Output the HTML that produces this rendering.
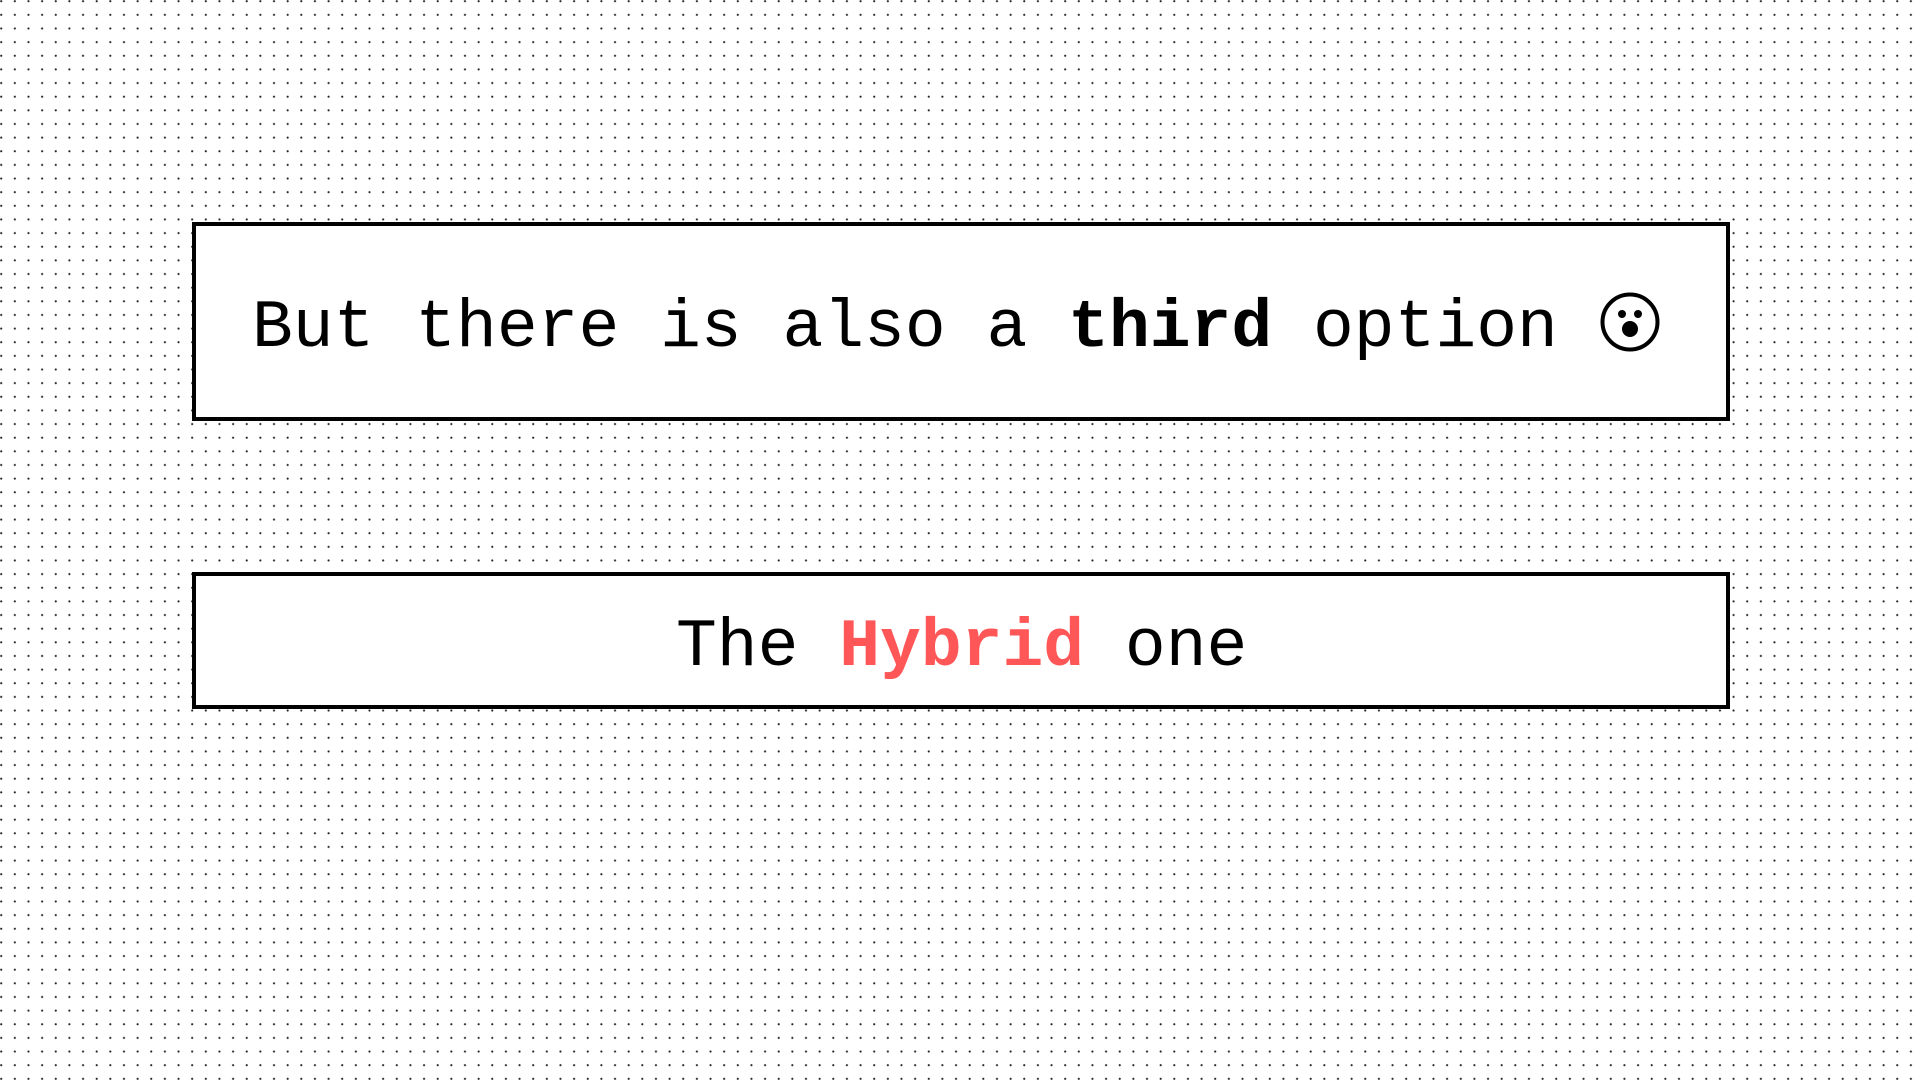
<!DOCTYPE html>
<html><head><meta charset="utf-8"><style>
html,body{margin:0;padding:0;}
body{width:1920px;height:1080px;position:relative;overflow:hidden;background-color:#fff;
background-image:radial-gradient(circle at 1.2px 1.2px,#222 0,#222 0.8px,transparent 1.3px);
background-size:13.65px 13.65px;background-position:0 0;
font-family:"Liberation Mono",monospace;color:#000;}
.box{position:absolute;background:#fff;border:4px solid #000;box-sizing:border-box;}
.t{position:absolute;font-size:68px;line-height:1;white-space:pre;}
</style></head><body>
<div class="box" style="left:192px;top:222px;width:1538px;height:199px;"></div>
<div class="t" style="left:252px;top:295px;">But there is also a <b>third</b> option</div>
<svg style="position:absolute;left:1600px;top:292px" width="60" height="60" viewBox="0 0 60 60">
<circle cx="30" cy="30" r="27.5" fill="none" stroke="#000" stroke-width="4"/>
<circle cx="22" cy="22" r="4" fill="#000"/>
<circle cx="38" cy="22" r="4" fill="#000"/>
<circle cx="30" cy="37" r="8" fill="#000"/>
</svg>
<div class="box" style="left:192px;top:572px;width:1538px;height:137px;"></div>
<div class="t" style="left:676px;top:614px;">The <b style="color:#ff5757">Hybrid</b> one</div>
</body></html>
